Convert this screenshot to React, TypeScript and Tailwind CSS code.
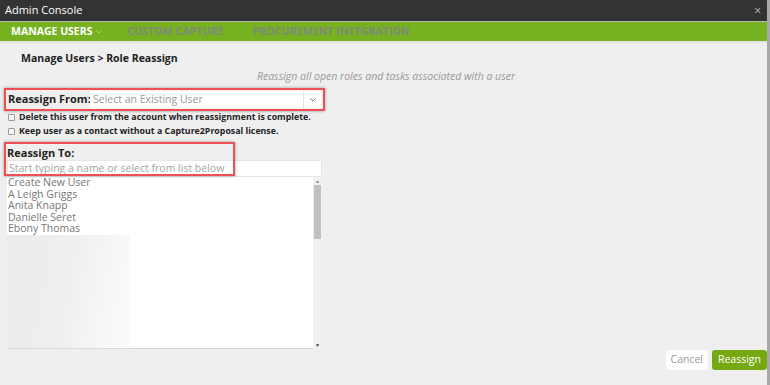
import { type FC } from "react";

const users = ["Create New User", "A Leigh Griggs", "Anita Knapp", "Danielle Seret", "Ebony Thomas"];

const App: FC = () => {
    return (
        <div className="w-[770px] h-[385px] overflow-hidden bg-[#efefef] border-r-[3px] border-[#a9a9a9] flex flex-col font-['Open_Sans',sans-serif]">
            {/* title bar */}
            <div className="h-[22px] shrink-0 bg-[#333333] border-b border-[#b5b5b5] flex items-center justify-between pl-[5px] pr-[6px]">
                <span className="text-[11px] text-white">Admin Console</span>
                <span className="text-[12px] leading-none text-[#bdbdbd]">×</span>
            </div>

            {/* nav */}
            <div className="h-[21px] shrink-0 bg-[#76b11f] border-b-2 border-[#e4e4e4] flex items-center pl-[11px] text-[10.5px] font-bold">
                <span className="text-white flex items-center">
                    MANAGE USERS
                    <svg width="8" height="6" viewBox="0 0 8 6" className="ml-[3px] mt-[1px]">
                        <path d="M1.5 1.5 L4 4 L6.5 1.5" stroke="#a8cf72" strokeWidth="1" fill="none" />
                    </svg>
                </span>
                <span className="text-[#7f8779] ml-[24px] tracking-[0.1px]">CUSTOM CAPTURE</span>
                <span className="text-[#7f8779] ml-[29px] tracking-[0.1px]">PROCUREMENT INTEGRATION</span>
            </div>

            {/* body */}
            <div className="flex-1 flex flex-col relative">
                <h1 className="text-[10.5px] font-bold text-[#222] pl-[21px] pt-[7px] leading-[16px]">
                    Manage Users &gt; Role Reassign
                </h1>
                <p className="text-[10.5px] italic text-[#999] text-center pl-[5px] mt-[3px] leading-[14px]">
                    Reassign all open roles and tasks associated with a user
                </p>

                <div className="ml-[4px] mt-[5px] w-[321px] h-[23px] border-2 border-[#ee4f55] shadow-[0_0_3px_rgba(0,0,0,0.35)] flex items-center pl-[2px] pr-[2px]">
                    <span className="text-[11px] font-bold text-[#222] whitespace-nowrap w-[82px] shrink-0">Reassign From:</span>
                    <div className="flex-1 h-[17px] bg-white flex items-center">
                        <span className="flex-1 text-[10.5px] text-[#999] pl-[3px]">Select an Existing User</span>
                        <div className="w-[18px] h-full border-l border-[#e3e3e3] flex items-center justify-center">
                            <svg width="8" height="6" viewBox="0 0 8 6">
                                <path d="M1.5 1.5 L4 4 L6.5 1.5" stroke="#777" strokeWidth="1" fill="none" />
                            </svg>
                        </div>
                    </div>
                </div>

                <div className="pl-[8px] mt-[1px] flex flex-col gap-[3px]">
                    <label className="flex items-center gap-[4px] text-[8.8px] font-bold text-[#222] leading-[11px]">
                        <span className="w-[7px] h-[7px] border border-[#999] rounded-[1px] bg-[#f6f6f6]" />
                        Delete this user from the account when reassignment is complete.
                    </label>
                    <label className="flex items-center gap-[4px] text-[8.8px] font-bold text-[#222] leading-[11px]">
                        <span className="w-[7px] h-[7px] border border-[#999] rounded-[1px] bg-[#f6f6f6]" />
                        Keep user as a contact without a Capture2Proposal license.
                    </label>
                </div>

                <div className="relative ml-[7px] mt-[9px] w-[315px]">
                    <div className="text-[11px] font-bold text-[#222] leading-[14px]">Reassign To:</div>
                    <div className="h-[17px] bg-white border border-[#e6e6e6] flex items-center">
                        <span className="text-[10.5px] text-[#a5a5a5] pl-[1px]">Start typing a name or select from list below</span>
                    </div>
                    <div className="absolute -left-[3px] -top-[4px] w-[231px] h-[34px] border-2 border-[#ee4f55] shadow-[0_0_3px_rgba(0,0,0,0.35)]" />
                </div>

                <div className="ml-[7px] w-[315px] h-[172px] flex">
                    <div className="flex-1 bg-white border-b border-[#d8d8d8] flex flex-col">
                        {users.map((u) => (
                            <div key={u} className="text-[10.5px] text-[#777] leading-[11.5px] pl-[1px]">
                                {u}
                            </div>
                        ))}
                        <div className="w-[123px] flex-1 bg-[linear-gradient(100deg,#ececec_0%,#eeeeee_45%,#f6f6f6_75%,#fbfbfb_100%)]" />
                    </div>
                    <div className="w-[9px] bg-[#f1f1f1] flex flex-col items-center">
                        <span className="text-[5px] leading-[8px] text-[#888]">▲</span>
                        <div className="w-[7px] h-[54px] bg-[#c1c1c1]" />
                        <div className="flex-1" />
                        <span className="text-[5px] leading-[8px] text-[#333]">▼</span>
                    </div>
                </div>

                <div className="absolute right-[0px] bottom-[15px] flex gap-[4px]">
                    <button className="h-[20px] px-[5px] bg-white rounded-[3px] text-[10.5px] text-[#999]">Cancel</button>
                    <button className="h-[20px] px-[6px] bg-[#76a811] rounded-[3px] text-[10.5px] text-white">Reassign</button>
                </div>
            </div>
        </div>
    );
};

export default App;
